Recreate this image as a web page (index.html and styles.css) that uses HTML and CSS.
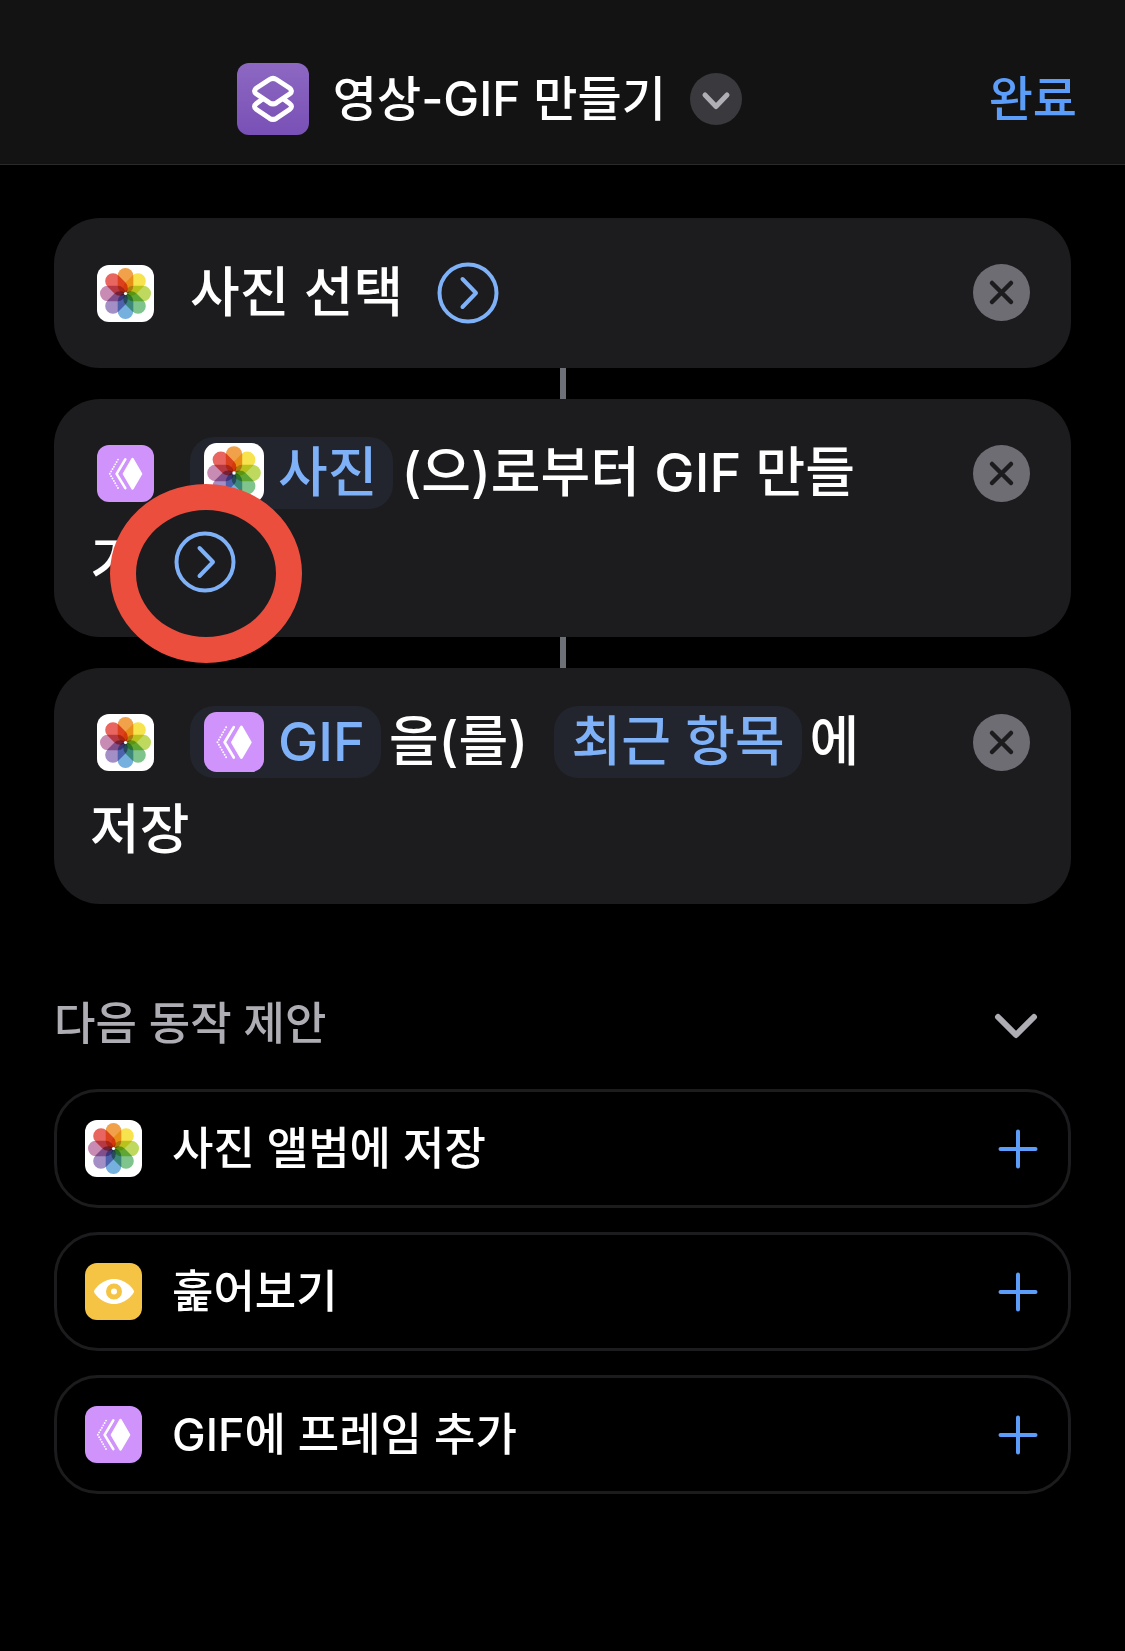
FILE: index.html
```html
<!DOCTYPE html>
<html lang="ko">
<head>
    <meta charset="UTF-8">
    <meta name="viewport" content="width=device-width, initial-scale=1.0">
    <title>영상-GIF 만들기</title>
    <link rel="stylesheet" href="styles.css">
</head>
<body>

<!-- Shared icons -->
<svg class="sprite" aria-hidden="true">
    <symbol id="photos" viewBox="0 0 57 57">
        <rect width="57" height="57" rx="12" fill="#fff"/>
        <g class="petals">
            <rect x="20.7" y="3" width="15.6" height="25.5" rx="7.8" fill="#f0a14a"/>
            <rect x="20.7" y="3" width="15.6" height="25.5" rx="7.8" fill="#f7e34d" transform="rotate(45 28.5 28.5)"/>
            <rect x="20.7" y="3" width="15.6" height="25.5" rx="7.8" fill="#bfd95f" transform="rotate(90 28.5 28.5)"/>
            <rect x="20.7" y="3" width="15.6" height="25.5" rx="7.8" fill="#7fc48c" transform="rotate(135 28.5 28.5)"/>
            <rect x="20.7" y="3" width="15.6" height="25.5" rx="7.8" fill="#76b0de" transform="rotate(180 28.5 28.5)"/>
            <rect x="20.7" y="3" width="15.6" height="25.5" rx="7.8" fill="#a48ec6" transform="rotate(225 28.5 28.5)"/>
            <rect x="20.7" y="3" width="15.6" height="25.5" rx="7.8" fill="#c88bb4" transform="rotate(270 28.5 28.5)"/>
            <rect x="20.7" y="3" width="15.6" height="25.5" rx="7.8" fill="#e8665f" transform="rotate(315 28.5 28.5)"/>
        </g>
        <circle cx="28.5" cy="28.5" r="1.6" fill="#fff"/>
    </symbol>
    <symbol id="gif" viewBox="0 0 57 57">
        <rect width="57" height="57" rx="12" fill="#cf93fb"/>
        <path d="M35.5 14.2L44 28.8L35.5 43.4L27 28.8Z" fill="#fff" stroke="#fff" stroke-width="2.6" stroke-linejoin="round"/>
        <path d="M28.3 14.4L19.6 28.8L28.3 43.2" fill="none" stroke="#fff" stroke-width="2.6" stroke-linecap="round" stroke-linejoin="round"/>
        <path d="M21 14.6L12.8 28.8L21 43" fill="none" stroke="#fff" stroke-width="1.9" stroke-linecap="round" stroke-dasharray="0 2.73"/>
    </symbol>
    <symbol id="eye" viewBox="0 0 57 57">
        <rect width="57" height="57" rx="12" fill="#f6c445"/>
        <path d="M9 28.5C9 26.5 17 16 29 16S49 26.5 49 28.5S41 41 29 41S9 30.5 9 28.5Z" fill="#fff"/>
        <circle cx="29" cy="28.5" r="5.5" fill="none" stroke="#f6c445" stroke-width="5"/>
    </symbol>
    <symbol id="more" viewBox="0 0 62 62">
        <circle cx="31" cy="31" r="28.5" fill="none" stroke="#7eb1f8" stroke-width="4"/>
        <path d="M25.5 17L39 31L25.5 45" fill="none" stroke="#7eb1f8" stroke-width="4" stroke-linecap="round" stroke-linejoin="round"/>
    </symbol>
    <symbol id="close" viewBox="0 0 57 57">
        <circle cx="28.5" cy="28.5" r="28.5" fill="#6e6d73"/>
        <path d="M19 19L38 38M38 19L19 38" stroke="#1c1c1e" stroke-width="4.5" stroke-linecap="round"/>
    </symbol>
    <symbol id="plus" viewBox="0 0 40 40">
        <path d="M20 2.5V37.5M2.5 20H37.5" stroke="#5b9df9" stroke-width="4" stroke-linecap="round"/>
    </symbol>
</svg>

<header class="topbar">
    <div class="topbar-title">
        <svg class="logo" viewBox="0 0 72 72" aria-hidden="true">
            <defs>
                <linearGradient id="logo-bg" x1="0" y1="0" x2="0" y2="1">
                    <stop offset="0" stop-color="#8d68c2"/>
                    <stop offset="1" stop-color="#7950b6"/>
                </linearGradient>
            </defs>
            <rect width="72" height="72" rx="12" fill="url(#logo-bg)"/>
            <g fill="none" stroke="#fff" stroke-width="5" stroke-linejoin="round">
                <path d="M32.5 16.5Q36 14.3 39.5 16.5L52.5 25Q56.5 28 52.5 31L39.5 39.8Q36 42 32.5 39.8L19.5 31Q15.5 28 19.5 25Z"/>
                <path d="M25.5 36L19.5 40.5Q15.5 43.5 19.5 46.5L32.5 55.3Q36 57.5 39.5 55.3L52.5 46.5Q56.5 43.5 52.5 40.5L46.5 36"/>
            </g>
        </svg>
        <h1>영상-GIF 만들기</h1>
        <button class="icon-button" aria-label="단축어 메뉴">
            <svg class="menu-icon" viewBox="0 0 52 52" aria-hidden="true">
                <circle cx="26" cy="26" r="26" fill="#3a393e"/>
                <path d="M15 22L26 33.5L37 22" fill="none" stroke="#b0afb6" stroke-width="5" stroke-linecap="round" stroke-linejoin="round"/>
            </svg>
        </button>
    </div>
    <button class="done">완료</button>
</header>

<main>
    <section class="actions">
        <article class="action">
            <p class="action-text"><svg class="action-icon" aria-hidden="true"><use href="#photos"/></svg>사진 선택<button class="icon-button more" aria-label="더 보기"><svg aria-hidden="true"><use href="#more"/></svg></button></p>
            <button class="icon-button close" aria-label="삭제"><svg aria-hidden="true"><use href="#close"/></svg></button>
        </article>
        <div class="connector"></div>
        <article class="action">
            <p class="action-text"><svg class="action-icon" aria-hidden="true"><use href="#gif"/></svg><button class="pill with-icon"><svg class="pill-icon" aria-hidden="true"><use href="#photos"/></svg>사진</button>(으)로부터 GIF 만들<wbr>기<button class="icon-button more" aria-label="더 보기"><svg aria-hidden="true"><use href="#more"/></svg></button></p>
            <button class="icon-button close" aria-label="삭제"><svg aria-hidden="true"><use href="#close"/></svg></button>
            <span class="marker"></span>
        </article>
        <div class="connector"></div>
        <article class="action">
            <p class="action-text"><svg class="action-icon" aria-hidden="true"><use href="#photos"/></svg><button class="pill with-icon"><svg class="pill-icon" aria-hidden="true"><use href="#gif"/></svg>GIF</button>을(를) <button class="pill">최근 항목</button>에 <wbr>저장</p>
            <button class="icon-button close" aria-label="삭제"><svg aria-hidden="true"><use href="#close"/></svg></button>
        </article>
    </section>

    <section class="suggestions">
        <div class="suggestions-head">
            <h2>다음 동작 제안</h2>
            <button class="icon-button" aria-label="접기">
                <svg class="fold-icon" viewBox="0 0 44 28" aria-hidden="true">
                    <path d="M4 5L22 23L40 5" fill="none" stroke="#aeadb3" stroke-width="6" stroke-linecap="round" stroke-linejoin="round"/>
                </svg>
            </button>
        </div>
        <ul>
            <li>
                <button class="suggestion">
                    <svg class="suggestion-icon" aria-hidden="true"><use href="#photos"/></svg>
                    <span class="suggestion-name">사진 앨범에 저장</span>
                    <svg class="plus-icon" aria-hidden="true"><use href="#plus"/></svg>
                </button>
            </li>
            <li>
                <button class="suggestion">
                    <svg class="suggestion-icon" aria-hidden="true"><use href="#eye"/></svg>
                    <span class="suggestion-name">훑어보기</span>
                    <svg class="plus-icon" aria-hidden="true"><use href="#plus"/></svg>
                </button>
            </li>
            <li>
                <button class="suggestion">
                    <svg class="suggestion-icon" aria-hidden="true"><use href="#gif"/></svg>
                    <span class="suggestion-name">GIF에 프레임 추가</span>
                    <svg class="plus-icon" aria-hidden="true"><use href="#plus"/></svg>
                </button>
            </li>
        </ul>
    </section>
</main>

</body>
</html>
```

FILE: styles.css
```css
* {
    box-sizing: border-box;
}
body {
    margin: 0;
    background-color: #000;
    color: #fff;
    font-family: Inter, "Noto Sans CJK KR", sans-serif;
}
h1, h2, p, ul {
    margin: 0;
    padding: 0;
}
ul {
    list-style: none;
}
button {
    margin: 0;
    padding: 0;
    border: none;
    background: none;
    color: inherit;
    font: inherit;
    cursor: pointer;
}
svg {
    display: block;
}
.sprite {
    position: absolute;
    width: 0;
    height: 0;
}
.petals {
    isolation: isolate;
}
.petals rect {
    mix-blend-mode: multiply;
}

/* Top bar */
.topbar {
    display: flex;
    align-items: center;
    padding: 63px 48px 29px 0;
    background-color: #131313;
    border-bottom: 1px solid #2a2a2c;
}
.topbar-title {
    flex: 1;
    display: flex;
    align-items: center;
    justify-content: center;
    gap: 24px;
    padding-right: 10px;
}
.logo {
    width: 72px;
    height: 72px;
}
h1 {
    font-size: 48px;
    line-height: 72px;
    font-weight: 500;
}
.menu-icon {
    width: 52px;
    height: 52px;
}
.done {
    color: #5b9df9;
    font-size: 48px;
    line-height: 72px;
    font-weight: 500;
}

/* Actions */
main {
    padding: 53px 54px;
}
.action {
    position: relative;
    display: flex;
    align-items: flex-start;
    justify-content: space-between;
    gap: 84px;
    padding: 30px 41px 30px 36px;
    background-color: #1c1c1e;
    border-radius: 46px;
}
.action-text {
    font-size: 54px;
    line-height: 88px;
    font-weight: 500;
    word-break: break-all;
}
.action-icon {
    display: inline-block;
    width: 57px;
    height: 57px;
    margin: 0 36px 0 7px;
    vertical-align: -10px;
}
.more {
    display: inline-block;
    margin: 14px 0 14px 34px;
    vertical-align: -12px;
}
.more svg {
    width: 62px;
    height: 62px;
}
.close {
    margin-top: 16px;
}
.close svg {
    width: 57px;
    height: 57px;
}
.pill {
    display: inline-block;
    margin-right: 8px;
    padding: 0 17px;
    background-color: #22252d;
    border-radius: 24px;
    color: #7eb1f8;
    line-height: 72px;
}
.pill + .pill {
    margin-left: 12px;
}
.with-icon {
    padding: 0 16px 0 14px;
}
.pill-icon {
    display: inline-block;
    width: 60px;
    height: 60px;
    margin-right: 14px;
    vertical-align: -11px;
}
.connector {
    width: 6px;
    height: 31px;
    margin: 0 auto;
    background-color: #6e7077;
}
/* Red ring drawn over the second action */
.marker {
    position: absolute;
    top: 85px;
    left: 56px;
    width: 192px;
    height: 179px;
    border: 26px solid #eb4e3d;
    border-radius: 50%;
    z-index: 1;
    pointer-events: none;
}

/* Suggestions */
.suggestions {
    padding-top: 85px;
}
.suggestions-head {
    display: flex;
    align-items: baseline;
    justify-content: space-between;
    padding-right: 33px;
    margin-bottom: 30px;
    color: #aeadb3;
}
h2 {
    font-size: 45px;
    line-height: 70px;
    font-weight: 500;
}
.fold-icon {
    width: 44px;
    height: 28px;
}
.suggestions ul {
    display: flex;
    flex-direction: column;
    gap: 24px;
}
.suggestion {
    display: flex;
    align-items: center;
    width: 100%;
    padding: 28px 30px 28px 28px;
    border: 3px solid #1c1c1e;
    border-radius: 44px;
    text-align: left;
}
.suggestion-icon {
    width: 57px;
    height: 57px;
}
.suggestion-name {
    flex: 1;
    margin-left: 30px;
    font-size: 45px;
    line-height: 57px;
    font-weight: 500;
}
.plus-icon {
    width: 40px;
    height: 40px;
}
```
